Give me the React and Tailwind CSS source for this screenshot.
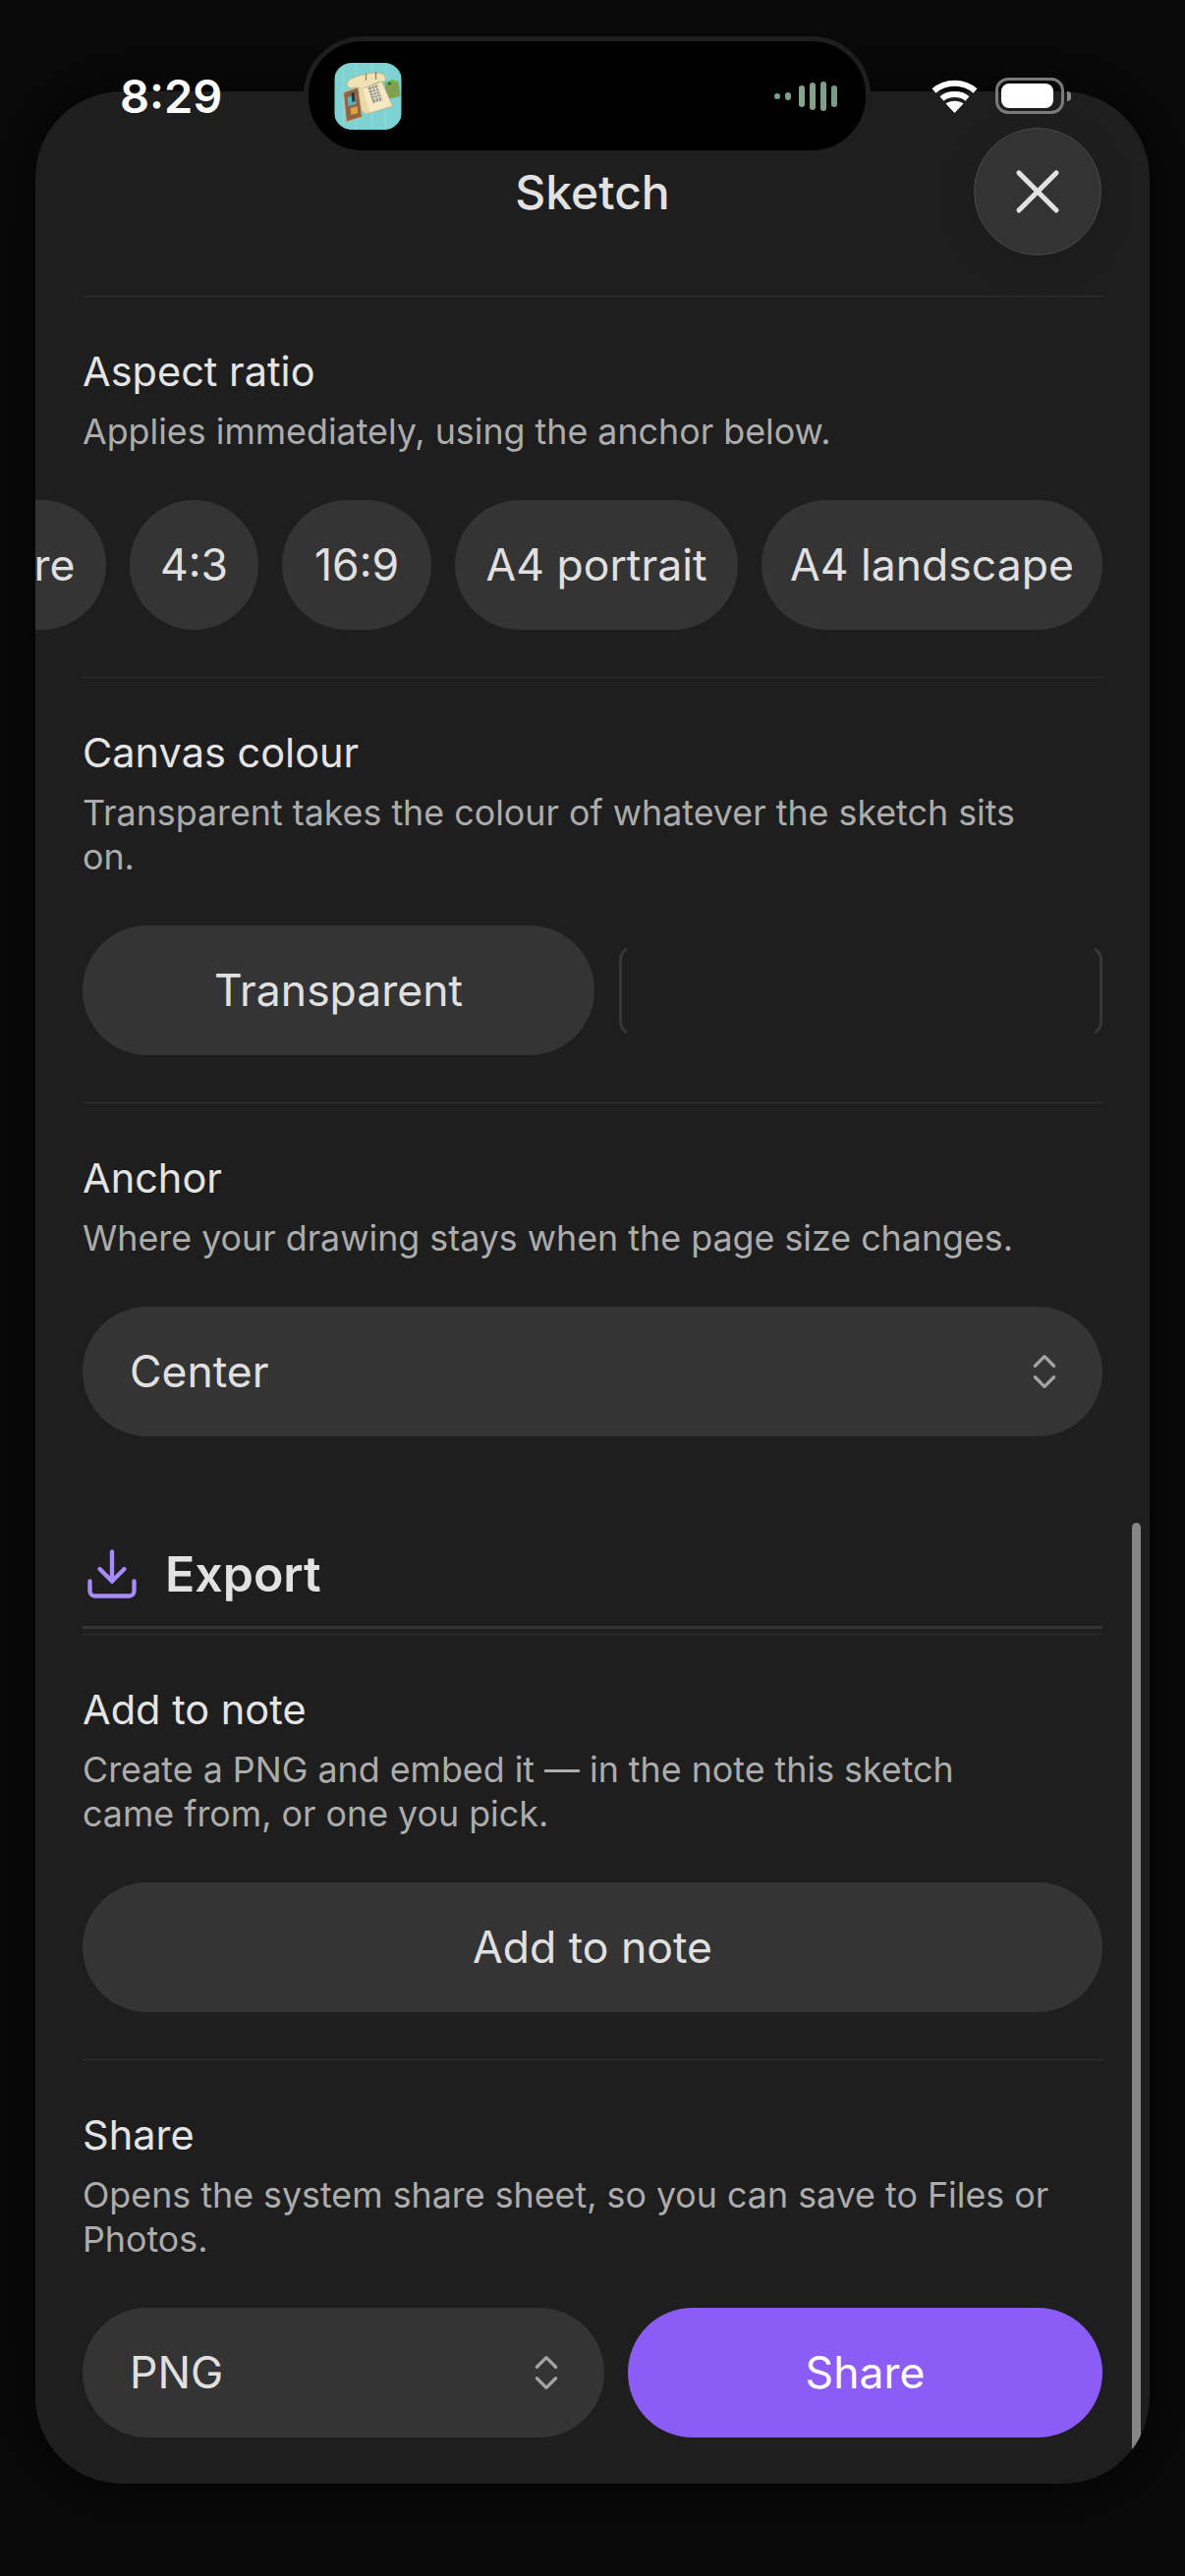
import React from "react";
import { X, ChevronsUpDown, Download } from "lucide-react";

function Section({ title, sub, children }) {
  return (
    <section className="border-t border-[#303030] pt-[49px] pb-[48px]">
      <Title>{title}</Title>
      <Sub>{sub}</Sub>
      <div className="mt-[47px]">{children}</div>
    </section>
  );
}

function Title({ children }) {
  return <h3 className="text-[41.5px] leading-[54px] text-[#e4e4e4] font-normal">{children}</h3>;
}

function Sub({ children }) {
  return <p className="mt-[12px] max-w-[990px] text-[35.8px] leading-[45px] text-[#acacac]">{children}</p>;
}

function Pill({ children, className = "" }) {
  return (
    <div className={`h-[132px] rounded-full bg-[#343434] flex items-center justify-center text-[#e0e0e0] text-[44.5px] shrink-0 ${className}`}>
      {children}
    </div>
  );
}

function Select({ value, className = "" }) {
  return (
    <div className={`h-[132px] rounded-full bg-[#343434] flex items-center justify-between pl-[48px] pr-[36px] text-[#e0e0e0] text-[44.5px] ${className}`}>
      <span>{value}</span>
      <ChevronsUpDown size={46} strokeWidth={1.75} className="text-[#a3a3a3]" />
    </div>
  );
}

function AppIcon() {
  return (
    <svg viewBox="0 0 68 68" className="w-[69px] h-[68px] rounded-[18px]">
      <rect width="68" height="68" fill="#7fd2d3" />
      <path d="M9 4v60M22 0v68M38 2v62M52 0v68" stroke="#8fdad9" strokeWidth="2" opacity=".6" />
      <path d="M51 20l14 -1 2 15 -14 3z" fill="#7fa04f" />
      <path d="M51 20l8 -3 6 2 -12 3z" fill="#6fb04c" />
      <circle cx="56" cy="21" r="1.6" fill="#1d6a35" />
      <path d="M28 27c-4 -3 -9 -2 -11 -1l-4 -2c-2 -4 3 -9 12 -11 10 -3 22 -4 25 -1 2 2 2 5 1 7l-8 1z" fill="#f1e2b6" stroke="#b9a878" strokeWidth=".7" />
      <path d="M28 26l20 -7 11 25 -23 7 -6 -4z" fill="#f6e9c4" stroke="#bba97a" strokeWidth=".7" />
      <path d="M18 26l10 0 8 24 -4 2 -8 -6z" fill="#ead8a8" />
      <path d="M34 25l10 -3 5 16 -10 3z" fill="#9a9889" />
      <path d="M35.5 28l10 -3M36.5 31l10 -3M37.5 34l10 -3M38.5 37l10 -3M37.5 24.5l5 16M40.5 23.5l5 16M43.5 22.5l5 16" stroke="#ece6cf" strokeWidth=".9" />
      <path d="M32 11v7M42 9v8" stroke="#8d7f5c" strokeWidth="1.3" />
      <path d="M9 30l15 -5 4 30 -16 5z" fill="#8f6344" stroke="#c9b48c" strokeWidth="1" />
      <path d="M13 35l8 -2 1 9 -8 2z" fill="#5db2c2" />
      <path d="M16 46l7 -2 1 7 -7 2z" fill="#d9a13f" />
      <path d="M17 31l3 -1 1 9 -3 1z" fill="#23343b" />
    </svg>
  );
}

function SoundBars() {
  const bars = [
    ["h-[6px] w-[6px]", "bg-[#79a08e]"],
    ["h-[8px] w-[6px]", "bg-[#7ea08d]"],
    ["h-[22px] w-[6px] ml-[3px]", "bg-[#86a48c]"],
    ["h-[28px] w-[6px]", "bg-[#86a08a]"],
    ["h-[30px] w-[6px]", "bg-[#7f9f8d]"],
    ["h-[22px] w-[6px]", "bg-[#7b9b89]"],
  ];
  return (
    <div className="flex items-center gap-[5px]">
      {bars.map(([size, color], i) => (
        <span key={i} className={`rounded-full ${size} ${color}`} />
      ))}
    </div>
  );
}

function Wifi() {
  return (
    <svg viewBox="0 0 47 35" className="w-[47px] h-[35px]" fill="none" stroke="#fff">
      <path d="M2.5 12.5C14 2 33 2 44.5 12.5" strokeWidth="6" />
      <path d="M10.5 20.5C17 14.5 30 14.5 36.5 20.5" strokeWidth="6" />
      <path d="M23.5 35L14.5 25.5C19 21.8 28 21.8 32.5 25.5Z" fill="#fff" stroke="none" />
    </svg>
  );
}

function Battery() {
  return (
    <div className="flex items-center gap-[3px]">
      <div className="w-[70px] h-[37px] rounded-[13px] border-[3px] border-[#7a7a7a] p-[3px]">
        <div className="h-full w-[53px] rounded-[8px] bg-white" />
      </div>
      <div className="w-[4px] h-[10px] rounded-r-full bg-[#8a8a8a]" />
    </div>
  );
}

export default function App() {
  return (
    <div className="relative w-[1206px] h-[2622px] overflow-hidden bg-[#0a0a0a] pt-[93px] px-[36px] font-['Inter',sans-serif]">
      <div className="relative h-[2435px] rounded-[88px] bg-[#1e1e1e] overflow-hidden shadow-[0_0_70px_rgba(0,0,0,0.9)]">
        <header className="h-[208px] flex items-center justify-center">
          <h1 className="-mt-[2px] text-[48px] font-medium text-[#e2e2e2]">Sketch</h1>
        </header>

        <div className="px-[48px]">
          <Section title="Aspect ratio" sub="Applies immediately, using the anchor below.">
            <div className="-mx-[48px] pr-[48px] flex justify-end gap-[24px] overflow-hidden">
              <Pill className="w-[212px]">Square</Pill>
              <Pill className="w-[131px]">4:3</Pill>
              <Pill className="w-[152px]">16:9</Pill>
              <Pill className="w-[288px]">A4 portrait</Pill>
              <Pill className="w-[347px]">A4 landscape</Pill>
            </div>
          </Section>

          <Section title="Canvas colour" sub="Transparent takes the colour of whatever the sketch sits on.">
            <div className="flex gap-[25px] items-center">
              <Pill className="w-[521px]">Transparent</Pill>
              <div className="relative flex-1 h-[91px] rounded-[14px] border-[3px] border-[#363636]">
                <div className="absolute -inset-y-[3px] inset-x-[5px] bg-[#1e1e1e]" />
              </div>
            </div>
          </Section>

          <section className="border-t border-[#303030] pt-[49px]">
            <Title>Anchor</Title>
            <Sub>Where your drawing stays when the page size changes.</Sub>
            <Select value="Center" className="mt-[47px]" />
          </section>

          <div className="mt-[102px] flex items-center gap-[24px] h-[75px] border-b-[3px] border-[#343434] pb-[16px] box-content">
            <Download size={60} strokeWidth={1.75} className="text-[#a78bfa]" />
            <h2 className="mt-[2px] text-[50px] font-semibold text-[#e2e2e2]">Export</h2>
          </div>
          <div className="h-[5px]" />

          <section className="border-t border-[#303030] pt-[49px] pb-[48px]">
            <Title>Add to note</Title>
            <Sub>Create a PNG and embed it — in the note this sketch<br />came from, or one you pick.</Sub>
            <Pill className="mt-[47px] w-full">Add to note</Pill>
          </section>

          <section className="border-t border-[#303030] pt-[49px]">
            <Title>Share</Title>
            <Sub>Opens the system share sheet, so you can save to Files or Photos.</Sub>
            <div className="mt-[47px] flex gap-[24px]">
              <Select value="PNG" className="w-[531px]" />
              <Pill className="flex-1 !bg-[#8b5cf6] !text-white font-normal">Share</Pill>
            </div>
          </section>
        </div>

        <button className="absolute right-[49px] top-[37px] w-[130px] h-[130px] rounded-full bg-[#333333] border border-[#4a4a4a] flex items-center justify-center text-[#e2e2e2] shadow-[0_8px_40px_rgba(0,0,0,0.12)]">
          <X size={76} strokeWidth={1.6} />
        </button>
        <div className="absolute right-[9px] top-[1457px] bottom-0 w-[9px] rounded-full bg-[#868686]" />
      </div>

      {/* Status bar and dynamic island over the sheet */}
      <div className="absolute left-[122px] top-[70px] text-[47px] leading-[56px] font-semibold text-white">8:29</div>
      <div className="absolute left-[309px] top-[37px] w-[577px] h-[121px] rounded-[60px] border-[5px] border-[#1e1e1e] bg-black flex items-center justify-between pl-[26px] pr-[29px]">
        <AppIcon />
        <SoundBars />
      </div>
      <div className="absolute left-[948px] top-[79px] flex items-center gap-[18px]">
        <Wifi />
        <Battery />
      </div>
    </div>
  );
}
